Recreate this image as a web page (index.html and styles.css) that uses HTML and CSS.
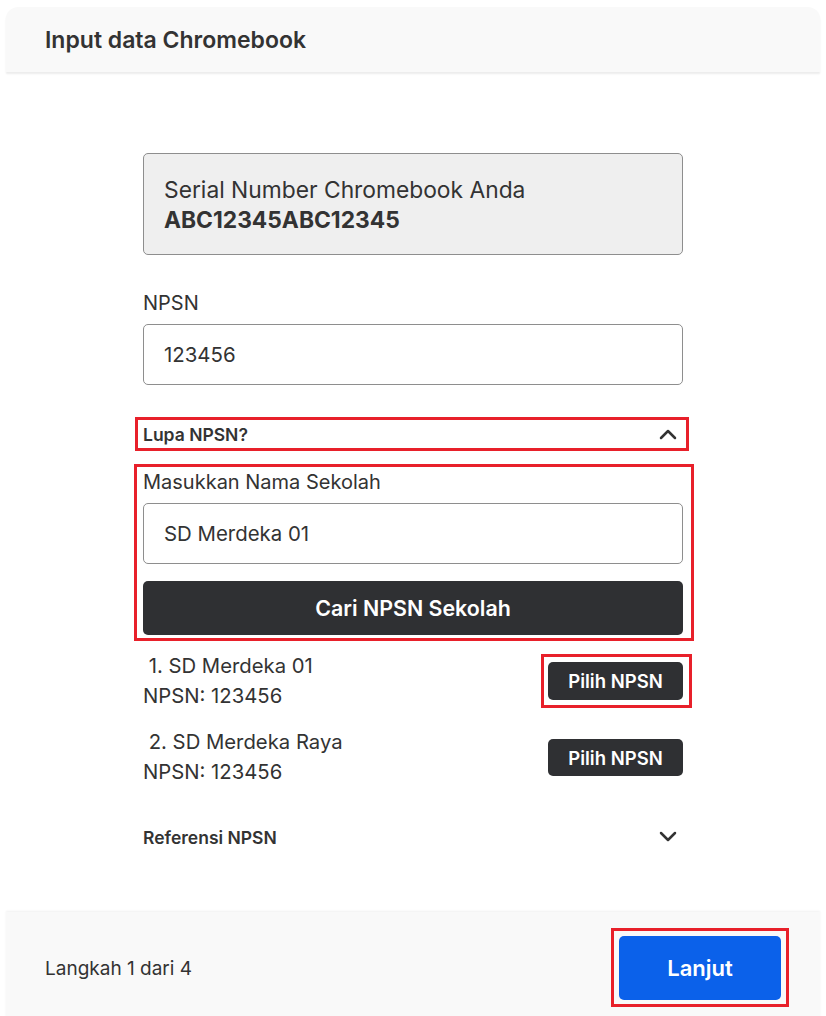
FILE: index.html
```html
<!DOCTYPE html>
<html lang="id">
<head>
<meta charset="utf-8">
<title>Input data Chromebook</title>
<link rel="stylesheet" href="styles.css">
</head>
<body>
<div class="page">
  <header class="topbar">
    <h1 class="title">Input data Chromebook</h1>
  </header>

  <main class="content">
    <div class="form">
      <div class="serial-box">
        <div class="serial-label">Serial Number Chromebook Anda</div>
        <div class="serial-value">ABC12345ABC12345</div>
      </div>

      <label class="field-label npsn-label">NPSN</label>
      <div class="input">123456</div>

      <div class="toggle-row lupa marked">
        <span class="toggle-text">Lupa NPSN?</span>
        <svg class="chev" width="18" height="12" viewBox="0 0 18 12"><path d="M2 10 L9 3 L16 10" fill="none" stroke="#333" stroke-width="2.5" stroke-linecap="round" stroke-linejoin="round"/></svg>
      </div>

      <div class="search marked">
        <label class="field-label">Masukkan Nama Sekolah</label>
        <div class="input">SD Merdeka 01</div>
        <button class="btn-dark btn-search">Cari NPSN Sekolah</button>
      </div>

      <ul class="results">
        <li class="result">
          <div class="result-text">
            <div class="result-name">&nbsp;1. SD Merdeka 01</div>
            <div>NPSN: 123456</div>
          </div>
          <button class="btn-dark btn-pick marked">Pilih NPSN</button>
        </li>
        <li class="result">
          <div class="result-text">
            <div class="result-name">&nbsp;2. SD Merdeka Raya</div>
            <div>NPSN: 123456</div>
          </div>
          <button class="btn-dark btn-pick">Pilih NPSN</button>
        </li>
      </ul>

      <div class="toggle-row ref">
        <span class="toggle-text">Referensi NPSN</span>
        <svg class="chev" width="18" height="12" viewBox="0 0 18 12"><path d="M2 2 L9 9 L16 2" fill="none" stroke="#333" stroke-width="2.5" stroke-linecap="round" stroke-linejoin="round"/></svg>
      </div>
    </div>
  </main>

  <footer class="footer">
    <span class="step">Langkah 1 dari 4</span>
    <button class="btn-next marked">Lanjut</button>
  </footer>
</div>
</body>
</html>
```

FILE: styles.css
```css
* { box-sizing: border-box; }

html, body {
  margin: 0;
  padding: 0;
  background: #ffffff;
}

body {
  font-family: Inter, "Noto Sans", "Liberation Sans", sans-serif;
  color: #333333;
  width: 826px;
  height: 1016px;
  overflow: hidden;
}

.page {
  display: flex;
  flex-direction: column;
}

.topbar {
  margin: 7px 6px 0;
  height: 65px;
  flex: none;
  background: #f9f9f9;
  border-radius: 12px 12px 0 0;
  box-shadow: 0 2px 2px rgba(0, 0, 0, 0.08);
  display: flex;
  align-items: center;
  padding: 0 39px;
}

.title {
  margin: 0;
  font-size: 23px;
  font-weight: 600;
  color: #333333;
}

.content {
  height: 840px;
  flex: none;
  display: flex;
  justify-content: center;
  padding-top: 81px;
}

.form {
  width: 540px;
  display: flex;
  flex-direction: column;
}

.serial-box {
  height: 102px;
  background: #efefef;
  border: 1px solid #8e8e8e;
  border-radius: 5px;
  padding: 21px 20px 0;
  font-size: 22.8px;
  line-height: 30px;
}

.serial-value {
  font-weight: 700;
}

.field-label {
  display: block;
  font-size: 20px;
  line-height: 24px;
  color: #333333;
}

.npsn-label {
  margin-top: 36px;
  margin-bottom: 9px;
}

.input {
  height: 61px;
  border: 1px solid #8e8e8e;
  border-radius: 5px;
  background: #ffffff;
  padding: 0 20px;
  display: flex;
  align-items: center;
  font-size: 20.4px;
  color: #333333;
}

.marked { position: relative; }
.marked::after {
  content: "";
  position: absolute;
  border: 3px solid #e8202a;
  pointer-events: none;
}

.toggle-row {
  display: flex;
  align-items: center;
  justify-content: space-between;
  height: 28px;
  padding-right: 6px;
}

.toggle-text {
  font-size: 17.5px;
  font-weight: 600;
  color: #333333;
}

.lupa {
  margin-top: 35px;
}
.lupa::after {
  top: -3px; bottom: -3px; left: -8px; right: -6px;
}

.search {
  margin-top: 19px;
  display: flex;
  flex-direction: column;
}
.search::after {
  top: -3px; bottom: -6px; left: -9px; right: -11px;
}
.search .field-label {
  margin-top: 3px;
  margin-bottom: 9px;
}

.btn-dark {
  font-family: inherit;
  background: #2f3033;
  color: #ffffff;
  border: none;
  border-radius: 5px;
  font-weight: 600;
  cursor: pointer;
}

.btn-search {
  margin-top: 17px;
  height: 54px;
  font-size: 21.4px;
}

.results {
  list-style: none;
  margin: 16px 0 0;
  padding: 0;
  display: flex;
  flex-direction: column;
  gap: 16px;
}

.result {
  display: flex;
  justify-content: space-between;
  align-items: flex-start;
  font-size: 20.3px;
  line-height: 30px;
}

.btn-pick {
  width: 135px;
  height: 38px;
  font-size: 18.5px;
  margin-top: 11px;
}
.btn-pick::after {
  top: -8px; bottom: -8px; left: -7px; right: -9px;
}
.result:nth-child(2) .btn-pick { margin-top: 12px; height: 37px; }

.ref {
  margin-top: 36px;
}

.footer {
  margin: 0 6px;
  height: 112px;
  flex: none;
  background: #f9f9f9;
  box-shadow: 0 -1px 2px rgba(0, 0, 0, 0.06);
  display: flex;
  align-items: center;
  justify-content: space-between;
  padding: 0 39px;
}

.step {
  font-size: 19px;
  color: #333333;
}

.btn-next {
  font-family: inherit;
  width: 162px;
  height: 64px;
  background: #0b61ea;
  color: #ffffff;
  border: none;
  border-radius: 5px;
  font-size: 22px;
  font-weight: 600;
  cursor: pointer;
}
.btn-next::after {
  top: -8px; bottom: -7px; left: -8px; right: -8px;
}
```
